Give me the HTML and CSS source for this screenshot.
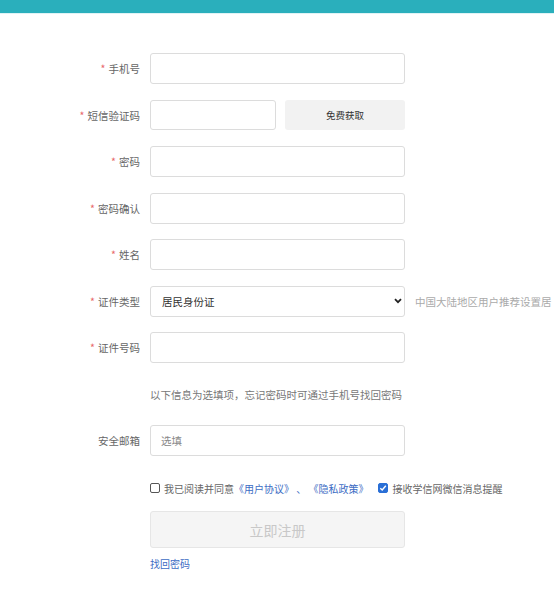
FILE: index.html
```html
<!DOCTYPE html>
<html lang="zh-CN">
<head>
<meta charset="utf-8">
<link rel="stylesheet" href="styles.css">
</head>
<body>
<div class="topbar"></div>
<form class="form">
  <div class="row"><label class="label"><span class="req">*</span>手机号</label><input class="input" type="text"></div>
  <div class="row"><label class="label"><span class="req">*</span>短信验证码</label><input class="input short" type="text"><button type="button" class="sms">免费获取</button></div>
  <div class="row"><label class="label"><span class="req">*</span>密码</label><input class="input" type="password"></div>
  <div class="row"><label class="label"><span class="req">*</span>密码确认</label><input class="input" type="password"></div>
  <div class="row"><label class="label"><span class="req">*</span>姓名</label><input class="input" type="text"></div>
  <div class="row"><label class="label"><span class="req">*</span>证件类型</label>
    <div class="select"><span>居民身份证</span><svg class="chev" width="8" height="6" viewBox="0 0 8 6"><path d="M1 1.2 L4 4.2 L7 1.2" fill="none" stroke="#222" stroke-width="1.8"/></svg></div>
    <span class="tip">中国大陆地区用户推荐设置居</span></div>
  <div class="row"><label class="label"><span class="req">*</span>证件号码</label><input class="input" type="text"></div>
  <div class="note">以下信息为选填项，忘记密码时可通过手机号找回密码</div>
  <div class="row"><label class="label">安全邮箱</label><div class="input ph">选填</div></div>
  <div class="agree">
    <span class="cb"></span><span>我已阅读并同意</span><a class="lnk">《用户协议》 、 《隐私政策》</a>
    <span class="cb on"><svg width="8" height="8" viewBox="0 0 8 8"><path d="M1.3 4.2 L3.2 6 L6.8 1.8" fill="none" stroke="#fff" stroke-width="1.4"/></svg></span><span>接收学信网微信消息提醒</span>
  </div>
  <div class="submit">立即注册</div>
  <a class="forgot">找回密码</a>
</form>
</body>
</html>
```
FILE: styles.css
```css
html, body {
  margin: 0;
  padding: 0;
  background: #fff;
  overflow: hidden;
}
body {
  font-family: "Noto Sans CJK SC", "Noto Sans", sans-serif;
  font-size: 10.5px;
  color: #666;
  width: 554px;
  height: 594px;
}
.topbar {
  height: 13px;
  background: #2aafbc;
  border-bottom: 1px solid #dff3f5;
}
.form {
  display: flex;
  flex-direction: column;
  padding-top: 39px;
  margin: 0;
}
.row {
  display: flex;
  align-items: center;
  height: 31px;
  margin-bottom: 15.5px;
  white-space: nowrap;
}
.row > * {
  flex-shrink: 0;
}
.label {
  width: 150px;
  padding-right: 10px;
  box-sizing: border-box;
  text-align: right;
  color: #666;
}
.req {
  color: #e8676a;
  margin-right: 3px;
}
.input {
  box-sizing: border-box;
  width: 255px;
  height: 31px;
  border: 1px solid #dcdcdc;
  border-radius: 3px;
  background: #fff;
  margin: 0;
  padding: 0 10px;
  font: inherit;
  outline: none;
}
.input.short {
  width: 126px;
  height: 30px;
}
.ph {
  display: flex;
  align-items: center;
  color: #888;
}
.sms {
  width: 120px;
  height: 30px;
  margin-left: 9px;
  border: none;
  border-radius: 3px;
  background: #f2f2f2;
  font: inherit;
  font-size: 9.5px;
  color: #333;
  padding: 0;
}
.select {
  box-sizing: border-box;
  width: 255px;
  height: 31px;
  border: 1px solid #dcdcdc;
  border-radius: 3px;
  display: flex;
  align-items: center;
  justify-content: space-between;
  padding: 0 2px 0 11px;
  color: #333;
}
.tip {
  margin-left: 10px;
  color: #aaa;
}
.note {
  padding-left: 150px;
  margin-top: 6px;
  height: 20px;
  line-height: 20px;
  margin-bottom: 20px;
  color: #777;
}
.agree {
  display: flex;
  align-items: center;
  padding-left: 150px;
  margin-top: 7px;
  height: 20px;
  white-space: nowrap;
  color: #666;
  font-size: 10px;
}
.cb {
  box-sizing: border-box;
  width: 10px;
  height: 10px;
  border: 1px solid #555;
  border-radius: 2px;
  margin-right: 4px;
  display: flex;
  align-items: center;
  justify-content: center;
}
.cb.on {
  background: #2a6fd6;
  border-color: #2a6fd6;
  margin-left: 10px;
}
.lnk {
  color: #3c6cc4;
}
.submit {
  margin-left: 150px;
  margin-top: 13px;
  width: 255px;
  height: 37px;
  box-sizing: border-box;
  border: 1px solid #e6e6e6;
  border-radius: 3px;
  background: #f5f5f5;
  color: #c8c8c8;
  font-size: 14px;
  display: flex;
  align-items: center;
  justify-content: center;
}
.forgot {
  margin-left: 150px;
  margin-top: 8px;
  color: #3c6cc4;
  font-size: 10px;
}
```
